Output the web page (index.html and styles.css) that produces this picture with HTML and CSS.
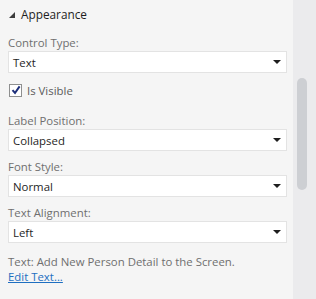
FILE: index.html
```html
<!DOCTYPE html>
<html>
<head>
    <title>Properties</title>
    <link rel="stylesheet" href="styles.css">
</head>
<body>
    <div class="shell">
        <div class="panel">
            <div class="section-head">
                <svg class="twisty" width="6" height="6" viewBox="0 0 6 6"><polygon points="6,0 6,6 0,6" fill="#3c3c3c"/></svg>
                <span>Appearance</span>
            </div>

            <div class="field">
                <div class="label">Control Type:</div>
                <div class="select"><span>Text</span><i class="arrow"></i></div>
            </div>

            <label class="check">
                <span class="box">
                    <svg width="10" height="10" viewBox="0 0 10 10"><path d="M1.5 5.2 L4 8 L8.6 1.4" fill="none" stroke="#1d2f7a" stroke-width="2"/></svg>
                </span>
                <span>Is Visible</span>
            </label>

            <div class="field">
                <div class="label">Label Position:</div>
                <div class="select"><span>Collapsed</span><i class="arrow"></i></div>
            </div>

            <div class="field">
                <div class="label">Font Style:</div>
                <div class="select"><span>Normal</span><i class="arrow"></i></div>
            </div>

            <div class="field">
                <div class="label">Text Alignment:</div>
                <div class="select"><span>Left</span><i class="arrow"></i></div>
            </div>

            <p class="summary">Text: Add New Person Detail to the Screen.</p>
            <a class="edit" href="#">Edit Text...</a>
        </div>
        <div class="scrollbar">
            <div class="thumb"></div>
        </div>
    </div>
</body>
</html>
```

FILE: styles.css
```css
body {
    margin: 0;
    font-family: "Open Sans", "Noto Sans", sans-serif;
    font-size: 11.4px;
    background-color: #f5f5f5;
    color: #6f6f6f;
}

.shell {
    display: flex;
    height: 299px;
}

.panel {
    width: 279px;
    padding: 5px 6px 0 8px;
}

.section-head {
    display: flex;
    align-items: center;
    gap: 6px;
    height: 18px;
    color: #1e1e1e;
    font-size: 11.8px;
}

.twisty {
    margin-left: 1px;
    margin-top: 1px;
}

.field {
    margin-top: 7px;
}

.section-head + .field {
    margin-top: 11px;
}

.label {
    line-height: 17px;
}

.select {
    display: flex;
    align-items: center;
    justify-content: space-between;
    height: 20px;
    padding: 0 4px;
    background-color: #fff;
    border: 1px solid #e3e3e3;
    color: #1e1e1e;
}

.arrow {
    width: 0;
    height: 0;
    border-left: 4px solid transparent;
    border-right: 4px solid transparent;
    border-top: 4px solid #1e1e1e;
    margin-right: 1px;
}

.check {
    display: flex;
    align-items: center;
    gap: 5px;
    margin-top: 10px;
    margin-left: 1px;
    height: 14px;
    color: #5b5b5b;
}

.box {
    display: flex;
    align-items: center;
    justify-content: center;
    width: 11px;
    height: 11px;
    border: 1px solid #8e8f8f;
    background-color: #fff;
}

.check + .field {
    margin-top: 15px;
}

.summary {
    margin: 11px 0 0 0;
    line-height: 15px;
}

.edit {
    display: block;
    line-height: 15px;
    color: #1e6fc1;
}

.scrollbar {
    width: 23px;
    background-color: #ebebed;
    padding-top: 78px;
}

.thumb {
    width: 10px;
    height: 112px;
    margin-left: 4px;
    border-radius: 5px;
    background-color: #cdcfd3;
}
```
